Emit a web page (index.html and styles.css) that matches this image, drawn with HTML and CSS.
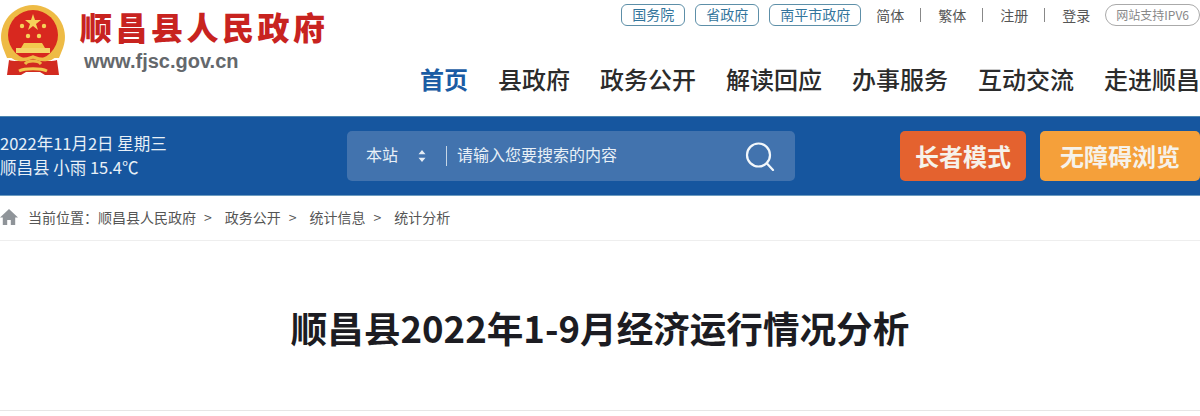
FILE: index.html
```html
<!DOCTYPE html>
<html lang="zh-CN">
<head>
    <meta charset="UTF-8">
    <title>顺昌县人民政府</title>
    <link rel="stylesheet" href="styles.css">
</head>
<body>
    <header class="site-header">
        <a class="logo" href="#">
            <svg class="emblem" width="64" height="72" viewBox="0 0 64 72">
                <path d="M32 0a32 32 0 0 1 30 43l-4 10H6L2 43A32 32 0 0 1 32 0z" fill="#eebb45"/>
                <circle cx="32" cy="30" r="25" fill="#d8281f"/>
                <polygon points="32,9 34,15 40,15 35,19 37,25 32,21 27,25 29,19 24,15 30,15" fill="#f6d25a"/>
                <circle cx="21" cy="21" r="2.200" fill="#f6d25a"/>
                <circle cx="43" cy="21" r="2.200" fill="#f6d25a"/>
                <circle cx="27" cy="31" r="2.200" fill="#f6d25a"/>
                <circle cx="38" cy="31" r="2.200" fill="#f6d25a"/>
                <path d="M23 38h18l3 5H20z" fill="#f2c94f"/>
                <rect x="15" y="43" width="34" height="5" fill="#f4d468"/>
                <path d="M8 55c6 2 16 1 24-2 8 3 18 4 24 2l2 15H44l-5-3H25l-5 3H6z" fill="#d22a20"/>
                <path d="M8 47c4 9 15 9 24 5 9 4 20 4 24-5" fill="none" stroke="#eebb45" stroke-width="3.500"/>
                <path d="M24 59c3-4 13-4 16 0" fill="none" stroke="#eebb45" stroke-width="3"/>
                <path d="M18 66c6-3 22-3 28 0" fill="none" stroke="#f2c94f" stroke-width="3"/>
            </svg>
            <span class="logo-text">
                <span class="logo-name">顺昌县人民政府</span>
                <span class="logo-url">www.fjsc.gov.cn</span>
            </span>
        </a>
        <div class="header-right">
            <div class="top-links">
                <a class="pill" href="#">国务院</a>
                <a class="pill" href="#">省政府</a>
                <a class="pill" href="#">南平市政府</a>
                <div class="user-links">
                    <a href="#">简体</a>
                    <a href="#">繁体</a>
                    <a href="#">注册</a>
                    <a href="#">登录</a>
                </div>
                <span class="ipv6">网站支持IPV6</span>
            </div>
            <nav class="main-nav">
                <a class="active" href="#">首页</a>
                <a href="#">县政府</a>
                <a href="#">政务公开</a>
                <a href="#">解读回应</a>
                <a href="#">办事服务</a>
                <a href="#">互动交流</a>
                <a href="#">走进顺昌</a>
            </nav>
        </div>
    </header>

    <section class="band">
        <div class="date-info">
            <p>2022年11月2日 星期三</p>
            <p>顺昌县 小雨 15.4℃</p>
        </div>
        <form class="search-box" onsubmit="event.preventDefault();">
            <span class="scope">本站</span>
            <svg class="scope-arrows" width="8" height="14" viewBox="0 0 8 14">
                <path d="M4 1l3.500 4.200H.5zM4 13L.5 8.800h7z" fill="#e4ecf5"/>
            </svg>
            <input class="search-input" type="text" placeholder="请输入您要搜索的内容">
            <button class="search-btn" type="submit" aria-label="搜索">
                <svg width="30" height="30" viewBox="0 0 30 30" fill="none" stroke="#f2f7fb" stroke-width="2.200" stroke-linecap="round">
                    <circle cx="13.500" cy="14" r="11.500"/>
                    <path d="M22 22.500l6 6.500"/>
                </svg>
            </button>
        </form>
        <div class="mode-btns">
            <a class="mode-btn elder" href="#">长者模式</a>
            <a class="mode-btn access" href="#">无障碍浏览</a>
        </div>
    </section>

    <div class="breadcrumb">
        <svg class="home-icon" width="18" height="16" viewBox="0 0 18 16">
            <path d="M9 0L0 8.500h2.800V16h4.400v-5h3.600v5h4.400V8.500H18z" fill="#8f9499"/>
        </svg>
        <span>当前位置：顺昌县人民政府</span>
        <i>&gt;</i>
        <span>政务公开</span>
        <i>&gt;</i>
        <span>统计信息</span>
        <i>&gt;</i>
        <span>统计分析</span>
    </div>

    <main class="article-head">
        <h1>顺昌县2022年1-9月经济运行情况分析</h1>
    </main>
</body>
</html>
```

FILE: styles.css
```css
* {
    box-sizing: border-box;
    margin: 0;
    padding: 0;
}

body {
    font-family: "Noto Sans CJK SC", "Noto Sans", sans-serif;
    background: #fff;
    color: #333;
    width: 1200px;
    height: 416px;
    overflow: hidden;
}

a {
    color: inherit;
    text-decoration: none;
}

.site-header {
    display: flex;
    justify-content: space-between;
    height: 116px;
}

.logo {
    display: flex;
    align-items: flex-start;
    gap: 15px;
    padding: 5px 0 0 1px;
}

.logo-text {
    display: flex;
    flex-direction: column;
}

.logo-name {
    font-size: 32px;
    line-height: 40px;
    font-weight: 900;
    letter-spacing: 3.500px;
    color: #c8231f;
    white-space: nowrap;
    margin-top: 1px;
}

.logo-url {
    font-family: "Liberation Sans", sans-serif;
    font-size: 20px;
    line-height: 24px;
    font-weight: 700;
    color: #64686c;
    margin: 3px 0 0 4px;
}

.header-right {
    display: flex;
    flex-direction: column;
    align-items: flex-end;
}

.top-links {
    display: flex;
    align-items: center;
    height: 30px;
    font-size: 14px;
}

.pill {
    height: 22px;
    line-height: 19px;
    padding: 0 10px;
    border: 1px solid #5d8fa8;
    border-radius: 6px;
    color: #33759c;
    margin-right: 10px;
    white-space: nowrap;
}

.user-links {
    display: flex;
    margin: 0 15px 0 5px;
    color: #555;
}

.user-links a {
    padding: 0 16px 0 17px;
    line-height: 14px;
    border-left: 1px solid #888;
}

.user-links a:first-child {
    border-left: none;
    padding-left: 0;
}

.user-links a:last-child {
    padding-right: 0;
}

.ipv6 {
    height: 22px;
    line-height: 19px;
    padding: 0 10px;
    border: 1px solid #aaa;
    border-radius: 11px;
    font-size: 12px;
    color: #888;
    white-space: nowrap;
}

.main-nav {
    display: flex;
    gap: 30px;
    margin-top: 31px;
    font-size: 24px;
    line-height: 36px;
    font-weight: 500;
    color: #2b2b2b;
    white-space: nowrap;
}

.main-nav .active {
    color: #1b5ca4;
    font-weight: 700;
}

.band {
    display: flex;
    align-items: center;
    height: 80px;
    background: #16569f;
    border-top: 1px solid #4d86b0;
    border-bottom: 1px solid #6d9cc0;
    color: #e8f0f7;
}

.date-info {
    width: 347px;
    font-size: 16.500px;
    line-height: 24px;
    margin-top: -2px;
}

.search-box {
    display: flex;
    align-items: center;
    width: 448px;
    height: 50px;
    padding: 0 20px 0 19px;
    background: #4273ae;
    border-radius: 5px;
}

.scope {
    font-size: 16px;
    margin-top: -4px;
}

.scope-arrows {
    margin: 0 20px 0 20px;
}

.search-input {
    flex: 1;
    min-width: 0;
    height: 20px;
    padding: 0 0 4px 10px;
    border: none;
    border-left: 1px solid #c6d6e6;
    outline: none;
    background: transparent;
    font: 16px/16px "Noto Sans CJK SC", sans-serif;
    color: #fff;
}

.search-input::placeholder {
    color: #e8f0f7;
    opacity: 1;
}

.search-btn {
    display: flex;
    border: none;
    background: none;
    cursor: pointer;
}

.mode-btns {
    display: flex;
    gap: 14px;
    margin-left: 105px;
}

.mode-btn {
    height: 50px;
    line-height: 50px;
    border-radius: 5px;
    text-align: center;
    font-size: 24px;
    font-weight: 700;
    color: #f6f2ea;
    white-space: nowrap;
}

.elder {
    width: 126px;
    background: #e4622f;
}

.access {
    width: 160px;
    background: #f5a03a;
}

.breadcrumb {
    display: flex;
    align-items: center;
    height: 45px;
    border-bottom: 1px solid #eee;
    font-size: 14px;
    color: #555;
    padding-bottom: 2px;
}

.breadcrumb .home-icon {
    margin-right: 10px;
}

.breadcrumb i {
    font-style: normal;
    margin: 0 13px 0 8px;
}

.article-head {
    height: 170px;
    border-bottom: 1px solid #e6e6e6;
    padding-top: 61px;
    text-align: center;
}

.article-head h1 {
    font-size: 36.600px;
    line-height: 52px;
    font-weight: 700;
    color: #1c1c22;
}
```
